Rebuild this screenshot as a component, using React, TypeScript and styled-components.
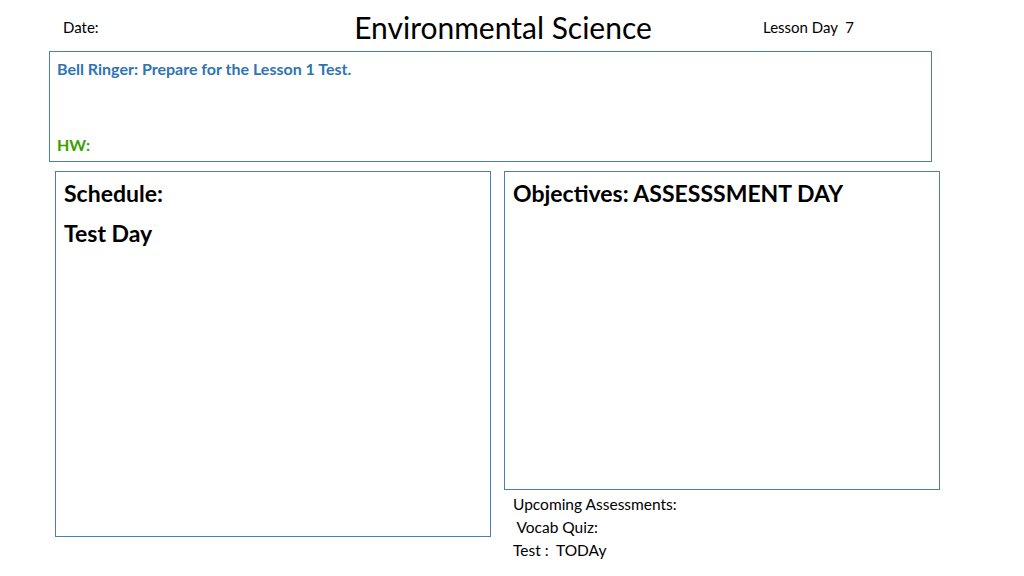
import React from "react";
import styled, { createGlobalStyle } from "styled-components";

const Global = createGlobalStyle`
  body { margin: 0; background: #fff; font-family: Lato, "Open Sans", sans-serif; color: #000; }
`;

const Slide = styled.div`
  width: 1024px;
  height: 576px;
  box-sizing: border-box;
  padding: 8px 0 0 49px;
  display: flex;
  flex-direction: column;
`;

const Header = styled.div`
  display: flex;
  align-items: center;
  height: 38px;
`;

const Small = styled.span<{ $w?: number }>`
  font-size: 15px;
  box-sizing: border-box;
  width: ${({ $w }) => ($w ? `${$w}px` : "auto")};
  white-space: pre;
`;

const Title = styled.h1`
  margin: 0;
  font-weight: 400;
  font-size: 30px;
  width: 406px;
  text-align: center;
`;

const Bell = styled.div`
  margin-top: 5px;
  width: 883px;
  height: 111px;
  box-sizing: border-box;
  border: 1px solid #4a7ebb;
  padding: 7px 7px;
  display: flex;
  flex-direction: column;
  justify-content: space-between;
  font-weight: 700;
  font-size: 16px;
`;

const Line = styled.div<{ $c: string }>`
  color: ${({ $c }) => $c};
`;

const Row = styled.div`
  display: flex;
  gap: 13px;
  margin: 9px 0 0 6px;
`;

const Panel = styled.div<{ $h: number }>`
  width: 436px;
  height: ${({ $h }) => $h}px;
  box-sizing: border-box;
  border: 1px solid #4a7ebb;
  padding: 1px 8px;
  font-weight: 700;
  font-size: 23px;
  line-height: 40px;
`;

const Column = styled.div`
  display: flex;
  flex-direction: column;
`;

const Upcoming = styled.div`
  margin: 3px 0 0 9px;
  font-size: 15.5px;
  line-height: 23px;
  white-space: pre;
`;

export default function App() {
  return (
    <>
      <Global />
      <Slide>
        <Header>
          <Small $w={251} style={{ paddingLeft: 14 }}>Date:</Small>
          <Title>Environmental Science</Title>
          <Small style={{ paddingLeft: 57 }}>Lesson Day  7</Small>
        </Header>
        <Bell>
          <Line $c="#2e74b5">Bell Ringer: Prepare for the Lesson 1 Test.</Line>
          <Line $c="#3aa000">HW:</Line>
        </Bell>
        <Row>
          <Panel $h={366}>
            <div>Schedule:</div>
            <div>Test Day</div>
          </Panel>
          <Column>
            <Panel $h={319}>Objectives: ASSESSSMENT DAY</Panel>
            <Upcoming>{"Upcoming Assessments:\n Vocab Quiz:\nTest :  TODAy"}</Upcoming>
          </Column>
        </Row>
      </Slide>
    </>
  );
}
